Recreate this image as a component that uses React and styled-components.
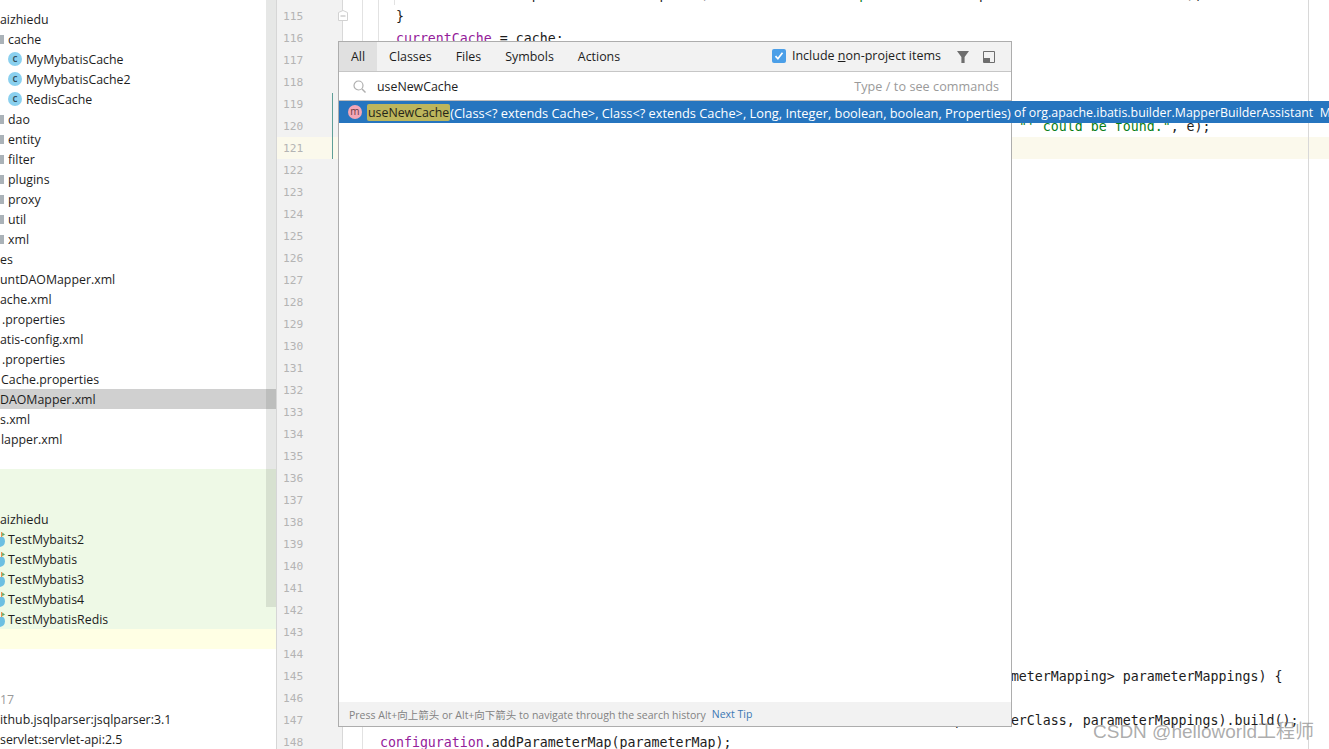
import React from "react";
import styled, { createGlobalStyle } from "styled-components";

const Global = createGlobalStyle`
  html, body { margin: 0; padding: 0; background: #fff; overflow: hidden; }
  body { font-family: "Open Sans", "Noto Sans CJK SC", sans-serif; }
`;

const Page = styled.div`
  position: relative;
  display: flex;
  width: 1329px;
  height: 749px;
  overflow: hidden;
`;

/* ---------- project tree ---------- */
const Sidebar = styled.aside`
  position: relative;
  flex: 0 0 276px;
  padding-top: 9px;
  overflow: hidden;
  border-right: 1px solid #d6d6d6;
  box-sizing: content-box;
`;
const bg = { selected: "#d0d0d0", added: "#eef9e6", current: "#ffffe4", none: "transparent" };
const Row = styled.div`
  display: flex;
  align-items: center;
  gap: ${(p) => (p.$tight ? 3 : 4)}px;
  height: 20px;
  padding-left: ${(p) => p.$x || 0}px;
  background: ${(p) => bg[p.$tone || "none"]};
  font-size: 12.35px;
  color: ${(p) => (p.$muted ? "#9a9a9a" : "#1d1d1d")};
  white-space: nowrap;
`;
const Folder = styled.span`
  flex: none;
  width: 4px;
  height: 9px;
  background: #aab2b8;
`;
const ClassIcon = styled.span`
  flex: none;
  width: 14px;
  height: 14px;
  border-radius: 50%;
  background: #8ad0ef;
  color: #34505c;
  font-size: 10px;
  font-weight: 600;
  line-height: 13px;
  text-align: center;
`;
const ScrollThumb = styled.div`
  position: absolute;
  top: 0;
  right: 0;
  width: 10px;
  height: 607px;
  background: rgba(60, 70, 60, 0.13);
`;

/* ---------- editor ---------- */
const Editor = styled.main`
  position: relative;
  flex: 1;
  display: flex;
  overflow: hidden;
  min-width: 0;
`;
const Gutter = styled.div`
  flex: 0 0 65px;
  margin-top: -17px;
  background: #f2f2f2;
  border-right: 1px solid #d8d8d8;
`;
const GutterRow = styled.div`
  display: flex;
  height: 22px;
  background: ${(p) => (p.$active ? "#fbf9ec" : "transparent")};
`;
const LineNo = styled.span`
  flex: 0 0 55px;
  padding-left: 6px;
  box-sizing: border-box;
  font: 11.2px/24px "DejaVu Sans Mono", monospace;
  color: #b4b4b4;
`;
const ChangeMark = styled.span`
  flex: 0 0 1px;
  background: ${(p) => (p.$on ? "#5f9f98" : "transparent")};
`;
const Code = styled.div`
  position: relative;
  flex: 1;
  margin-top: -17px;
  min-width: 0;
`;
const CodeLine = styled.pre`
  margin: 0;
  height: 22px;
  padding-left: 5px;
  font: 13.28px/24px "DejaVu Sans Mono", monospace;
  color: #1c1c1c;
  background: ${(p) => (p.$active ? "#fbf9ec" : "transparent")};
`;
const colors = { kw: "#0033b3", str: "#067d17", field: "#94209a", plain: "inherit" };
const Tok = styled.span`
  color: ${(p) => colors[p.$k]};
`;
const Guide = styled.i`
  position: absolute;
  top: 0;
  left: ${(p) => p.$x}px;
  width: 1px;
  height: ${(p) => p.$h}px;
  background: #e2e2e2;
`;
const Margin = styled.i`
  position: absolute;
  top: 0;
  bottom: 0;
  left: 1308px;
  width: 1px;
  background: #d8d8d8;
`;
const FoldMark = styled.svg`
  position: absolute;
  left: 338px;
  top: 10px;
`;

/* ---------- search everywhere ---------- */
const Popup = styled.section`
  position: absolute;
  left: 338px;
  top: 41px;
  width: 674px;
  height: 686px;
  box-sizing: border-box;
  border: 1px solid #adadad;
  background: #fff;
  display: flex;
  flex-direction: column;
`;
const TabBar = styled.div`
  display: flex;
  align-items: stretch;
  flex: 0 0 29px;
  background: #f2f2f2;
  border-bottom: 1px solid #c6c6c6;
  padding-right: 16px;
  font-size: 12.42px;
  color: #1d1d1d;
`;
const Tab = styled.div`
  display: flex;
  align-items: center;
  padding: 0 12px;
  background: ${(p) => (p.$on ? "#e0e0e0" : "transparent")};
`;
const Spacer = styled.div`
  flex: 1;
`;
const Include = styled.label`
  display: flex;
  align-items: center;
  gap: 6px;
  margin-right: 16px;
  margin-bottom: 2px;
  font-size: 12.5px;
`;
const Check = styled.span`
  flex: none;
  width: 14px;
  height: 14px;
  border-radius: 2px;
  background: #4b9fe8;
  display: flex;
  align-items: center;
  justify-content: center;
`;
const ToolIcons = styled.div`
  display: flex;
  align-items: center;
  gap: 14px;
`;
const SearchRow = styled.div`
  display: flex;
  align-items: center;
  flex: 0 0 28px;
  gap: 11px;
  padding: 0 12px 0 14px;
  border-bottom: 1px solid #bdbdbd;
  font-size: 12.35px;
  color: #1d1d1d;
`;
const Hint = styled.span`
  margin-left: auto;
  color: #9a9a9a;
  letter-spacing: 0.07px;
  font-size: 12.6px;
`;
const ResultList = styled.div`
  flex: 1;
  min-height: 0;
`;
const Result = styled.div`
  display: flex;
  align-items: center;
  width: 990px;
  height: 22px;
  padding: 1px 0 0 9px;
  box-sizing: border-box;
  overflow: hidden;
  background: #2675bf;
  color: #fff;
  font-size: 12.38px;
  white-space: pre;
`;
const Signature = styled.span`
  font-size: 12.8px;
`;
const MethodIcon = styled.span`
  flex: none;
  width: 14px;
  height: 14px;
  margin: -1px 5px 0 0;
  border-radius: 50%;
  background: #f4a6b6;
  color: #6b3a44;
  font-size: 10px;
  line-height: 12px;
  text-align: center;
`;
const Match = styled.mark`
  background: #bdb65c;
  color: #25251a;
  border-radius: 2px;
  padding: 0 1px;
  font-size: 12.35px;
`;
const Footer = styled.div`
  flex: 0 0 24px;
  display: flex;
  align-items: center;
  gap: 6px;
  padding-left: 10px;
  background: #f2f2f2;
  font-size: 10.5px;
  color: #828282;
`;
const TipLink = styled.span`
  color: #3b78b4;
`;
const Underlined = styled.span`
  text-decoration: underline;
`;
const Watermark = styled.div`
  position: absolute;
  left: 1093px;
  top: 716px;
  font-family: "Liberation Sans", "Noto Sans CJK SC", sans-serif;
  font-size: 19px;
  color: rgba(120, 120, 120, 0.62);
  white-space: nowrap;
`;

/* ---------- data ---------- */
const tree = [
  { t: "aizhiedu" },
  { t: "cache", folder: 1 },
  { t: "MyMybatisCache", cls: 1, x: 8 },
  { t: "MyMybatisCache2", cls: 1, x: 8 },
  { t: "RedisCache", cls: 1, x: 8 },
  { t: "dao", folder: 1 },
  { t: "entity", folder: 1 },
  { t: "filter", folder: 1 },
  { t: "plugins", folder: 1 },
  { t: "proxy", folder: 1 },
  { t: "util", folder: 1 },
  { t: "xml", folder: 1 },
  { t: "es" },
  { t: "untDAOMapper.xml" },
  { t: "ache.xml" },
  { t: ".properties", x: 2 },
  { t: "atis-config.xml" },
  { t: ".properties", x: 2 },
  { t: "Cache.properties", x: 1 },
  { t: "DAOMapper.xml", tone: "selected" },
  { t: "s.xml" },
  { t: "lapper.xml", x: 1 },
  {},
  { tone: "added" },
  { tone: "added" },
  { t: "aizhiedu", tone: "added" },
  { t: "TestMybaits2", test: 1, tone: "added" },
  { t: "TestMybatis", test: 1, tone: "added" },
  { t: "TestMybatis3", test: 1, tone: "added" },
  { t: "TestMybatis4", test: 1, tone: "added" },
  { t: "TestMybatisRedis", test: 1, tone: "added" },
  { tone: "current" },
  {},
  {},
  { t: "17", muted: 1 },
  { t: "ithub.jsqlparser:jsqlparser:3.1" },
  { t: "servlet:servlet-api:2.5" },
];

/* Only what the popup leaves visible: hidden columns stay blank. */
const code = {
  114: `        throw new IncompleteElementException("No cache for namespace '" + namespace + "' could be found.");`,
  115: `      }`,
  116: `      currentCache = cache;`,
  120: " ".repeat(84) + `"' could be found.", e);`,
  145: " ".repeat(74) + `List<ParameterMapping> parameterMappings) {`,
  147: " ".repeat(76) + `parameterClass, parameterMappings).build();`,
  148: `    configuration.addParameterMap(parameterMap);`,
};

const tokenRe = /("[^"]*")|\b(throw|new)\b|\b(currentCache|configuration)\b/g;
function tokens(line) {
  const out = [];
  let last = 0;
  for (const m of line.matchAll(tokenRe)) {
    if (m.index > last) out.push(["plain", line.slice(last, m.index)]);
    out.push([m[1] ? "str" : m[2] ? "kw" : "field", m[0]]);
    last = m.index + m[0].length;
  }
  if (last < line.length) out.push(["plain", line.slice(last)]);
  return out;
}

const FIRST = 114;
const ACTIVE = 121;
const lineNumbers = Array.from({ length: 35 }, (_, i) => FIRST + i);

const TestIcon = () => (
  <svg width="5" height="15" viewBox="0 0 5 15">
    <path d="M0 5h2.5A2.5 5 0 0 1 5 9.5 6 6 0 0 1 0 15z" fill="#6cbfe2" />
    <path d="M1 0h1.2v5H1z" fill="#e9914f" />
    <path d="M2.2 .6L5 2.4 2.2 4.2z" fill="#59a869" />
  </svg>
);

export default function App() {
  return (
    <Page>
      <Global />
      <Sidebar>
        {tree.map((r, i) => (
          <Row key={i} $x={r.x} $tone={r.tone} $muted={r.muted} $tight={r.test}>
            {r.folder && <Folder />}
            {r.cls && <ClassIcon>c</ClassIcon>}
            {r.test && <TestIcon />}
            {r.t}
          </Row>
        ))}
        <ScrollThumb />
      </Sidebar>
      <Editor>
        <Gutter>
          {lineNumbers.map((n) => (
            <GutterRow key={n} $active={n === ACTIVE}>
              <LineNo>{n}</LineNo>
              <ChangeMark $on={n >= 119 && n <= 121} />
            </GutterRow>
          ))}
        </Gutter>
        <Code>
          {lineNumbers.map((n) => (
            <CodeLine key={n} $active={n === ACTIVE}>
              {tokens(code[n] || "").map(([k, t], j) => (
                <Tok key={j} $k={k}>{t}</Tok>
              ))}
            </CodeLine>
          ))}
          <Guide $x={19} $h={780} />
          <Guide $x={35} $h={600} />
          <Guide $x={51} $h={22} />
        </Code>
      </Editor>
      <Margin />
      <FoldMark width="10" height="11" viewBox="0 0 10 11">
        <path d="M.5 2.5L5 .5l4.5 2v8h-9z" fill="#fff" stroke="#d2d2d2" />
        <path d="M2.5 6h5" stroke="#b5b5b5" />
      </FoldMark>
      <Popup>
        <TabBar>
          <Tab $on>All</Tab>
          <Tab>Classes</Tab>
          <Tab>Files</Tab>
          <Tab>Symbols</Tab>
          <Tab>Actions</Tab>
          <Spacer />
          <Include>
            <Check>
              <svg width="10" height="10" viewBox="0 0 10 10">
                <path d="M1.5 5.2l2.4 2.6L8.5 1.8" fill="none" stroke="#fff" strokeWidth="1.7" />
              </svg>
            </Check>
            <span>Include <Underlined>n</Underlined>on-project items</span>
          </Include>
          <ToolIcons>
            <svg width="12" height="12" viewBox="0 0 12 12">
              <path d="M0 0h12L7.6 6v6H4.4V6z" fill="#6e6e6e" />
            </svg>
            <svg width="12" height="12" viewBox="0 0 12 12">
              <path d="M.5.5h11v11H.5z" fill="none" stroke="#6e6e6e" />
              <path d="M1 7h6v4H1z" fill="#6e6e6e" />
            </svg>
          </ToolIcons>
        </TabBar>
        <SearchRow>
          <svg width="13" height="13" viewBox="0 0 13 13">
            <circle cx="5.5" cy="5.5" r="4.5" fill="none" stroke="#aeaeae" strokeWidth="1.2" />
            <path d="M9 9l3.5 3.5" stroke="#aeaeae" strokeWidth="1.4" />
          </svg>
          useNewCache
          <Hint>Type / to see commands</Hint>
        </SearchRow>
        <ResultList>
          <Result>
            <MethodIcon>m</MethodIcon>
            <Match>useNewCache</Match>
            <Signature>(Class&lt;? extends Cache&gt;, Class&lt;? extends Cache&gt;, Long, Integer, boolean, boolean, Properties)</Signature>
            {" of org.apache.ibatis.builder.MapperBuilderAssistant  Mybatis"}
          </Result>
        </ResultList>
        <Footer>
          <span>Press Alt+向上箭头 or Alt+向下箭头 to navigate through the search history</span>
          <TipLink>Next Tip</TipLink>
        </Footer>
      </Popup>
      <Watermark>CSDN @helloworld工程师</Watermark>
    </Page>
  );
}
